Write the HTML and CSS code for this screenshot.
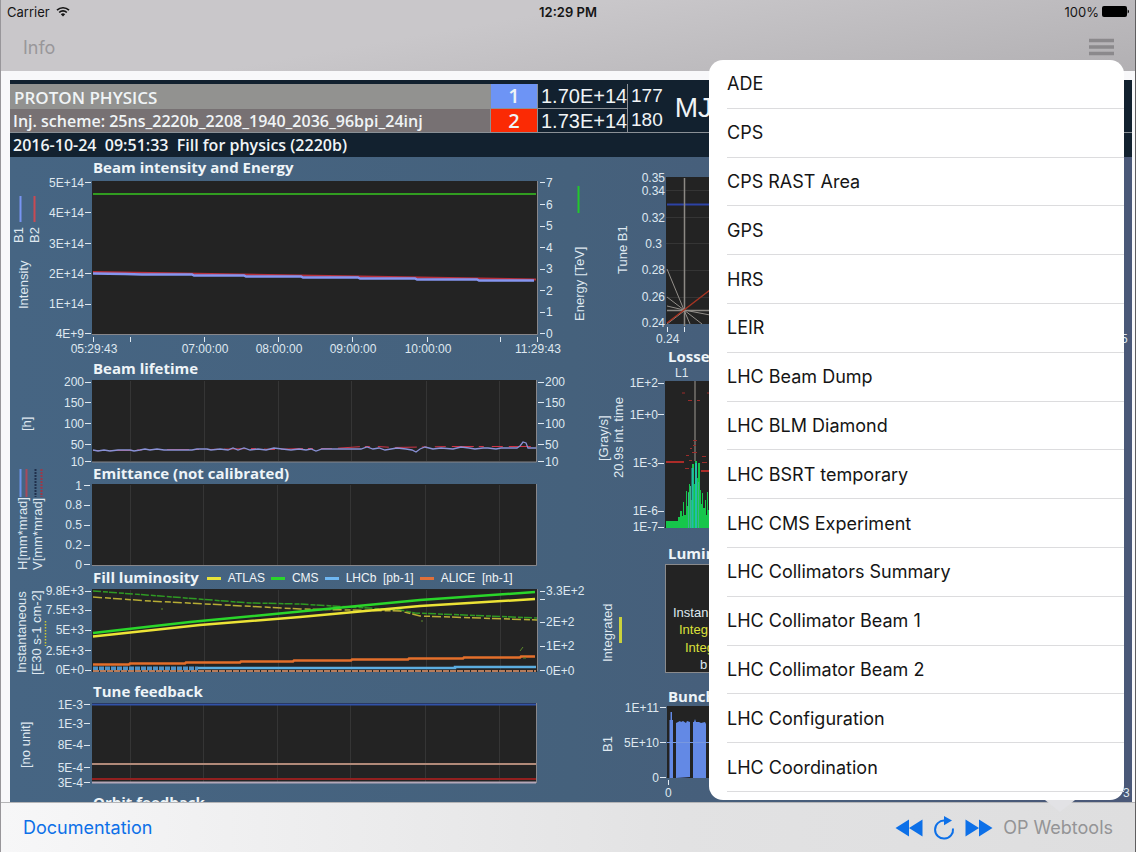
FILE: index.html
```
<!DOCTYPE html>
<html lang="en">
<head>
  <meta charset="UTF-8">
  <meta name="viewport" content="width=device-width, initial-scale=1.0">
  <title>OP Webtools</title>
  <link rel="stylesheet" href="styles.css">
</head>
<body>
  <div class="screen">
    <!-- Status bar + navigation -->
    <header class="top-bar">
      <div class="status">
        <div class="status-left">
          <span>Carrier</span>
          <svg width="14" height="11" viewBox="0 0 14 11" aria-hidden="true">
            <path d="M1 4.2a8.6 8.6 0 0 1 12 0M3.2 6.5a5.4 5.4 0 0 1 7.6 0" fill="none" stroke="#151515" stroke-width="1.7"/>
            <path d="M7 10.6L4.8 8.3a3.1 3.1 0 0 1 4.4 0z" fill="#151515"/>
          </svg>
        </div>
        <div class="status-time">12:29 PM</div>
        <div class="status-right">
          <span>100%</span>
          <svg width="27" height="11" viewBox="0 0 27 11" aria-hidden="true">
            <rect x="0" y="0" width="25" height="11" rx="2"/>
            <path d="M25.6 3.5q1.4.5 1.4 2t-1.4 2z"/>
          </svg>
        </div>
      </div>
      <nav class="nav">
        <button type="button" class="nav-button">Info</button>
        <button type="button" class="menu-button" aria-label="Menu">
          <svg width="26" height="18" viewBox="0 0 26 18"><path d="M0 2.500h25M0 9h25M0 15.500h25" stroke="#8b898c" stroke-width="3.500"/></svg>
        </button>
      </nav>
    </header>

    <!-- LHC page 1 -->
    <main class="webview">
      <div class="dashboard">
        <div class="summary">
          <div class="mode">PROTON PHYSICS</div>
          <div class="beam beam1">1</div>
          <div class="value">1.70E+14</div>
          <div class="energy"><span class="mj-values">177<br>180</span><span class="mj">MJ</span></div>
          <div class="scheme">Inj. scheme: 25ns_2220b_2208_1940_2036_96bpi_24inj</div>
          <div class="beam beam2">2</div>
          <div class="value">1.73E+14</div>
        </div>
        <div class="fill-info">2016-10-24&nbsp; 09:51:33&nbsp; Fill for physics (2220b)</div>

        <div class="charts">
          <div class="column">
            <section>
              <h2>Beam intensity and Energy</h2>
              <svg class="chart" viewBox="10 177 590 181">
                <rect class="plot" x="92" y="181" width="445" height="153"/>
                <path class="frame" d="M537.5 181v153.500H92"/>
                <path class="tick" d="M85 182.500h6M85 212.500h6M85 243.500h6M85 273.500h6M85 304.500h6M85 333.500h6M540 182.500h5M540 204.500h5M540 226.500h5M540 247.500h5M540 269.500h5M540 290.500h5M540 312.500h5M540 333.500h5M93.500 337v5M130.500 337v5M204.500 337v5M278.500 337v5M352.500 337v5M427.500 337v5M500.500 337v5M537.500 337v5"/>
                <g class="end">
                  <text x="84" y="187">5E+14</text><text x="84" y="217">4E+14</text><text x="84" y="248">3E+14</text>
                  <text x="84" y="278">2E+14</text><text x="84" y="308">1E+14</text><text x="84" y="338">4E+9</text>
                </g>
                <text x="546" y="187">7</text><text x="546" y="209">6</text><text x="546" y="230">5</text><text x="546" y="252">4</text>
                <text x="546" y="273">3</text><text x="546" y="295">2</text><text x="546" y="316">1</text><text x="546" y="338">0</text>
                <g class="mid">
                  <text x="94" y="353">05:29:43</text><text x="205" y="353">07:00:00</text><text x="279" y="353">08:00:00</text>
                  <text x="353" y="353">09:00:00</text><text x="428" y="353">10:00:00</text><text x="538" y="353">11:29:43</text>
                </g>
                <path d="M93 194h443" stroke="#319c20" stroke-width="2"/>
                <path d="M93 272L536 279.500" fill="none" stroke="#b8303c" stroke-width="2"/>
                <path d="M93 273.500l32 .5 17 .5h50l2 1h50l2 1h55l2 1h55l2 1h55l2 1h60l2 1h55" fill="none" stroke="#8595f0" stroke-width="2.500"/>
                <path d="M20.500 196v26" stroke="#7895f2" stroke-width="2"/>
                <path d="M34.500 196v26" stroke="#c94a52" stroke-width="2"/>
                <path d="M578.500 186v27" stroke="#23c72c" stroke-width="2"/>
                <g class="side">
                  <text transform="translate(23 243) rotate(-90)">B1</text>
                  <text transform="translate(39 243) rotate(-90)">B2</text>
                  <text transform="translate(28 309) rotate(-90)">Intensity</text>
                  <text transform="translate(584 321) rotate(-90)">Energy [TeV]</text>
                </g>
              </svg>
            </section>

            <section>
              <h2>Beam lifetime</h2>
              <svg class="chart" viewBox="10 378 590 85">
                <rect class="plot" x="92" y="380" width="445" height="82"/>
                <path class="grid-line" d="M130.500 381v80M204.500 381v80M278.500 381v80M351.500 381v80M426.500 381v80M499.500 381v80"/>
                <path class="frame" d="M536.500 380v82H92"/>
                <path class="tick" d="M85 382.500h6M85 402.500h6M85 423.500h6M85 444.500h6M85 461.500h6M538 382.500h6M538 402.500h6M538 423.500h6M538 444.500h6M538 461.500h6"/>
                <g class="end">
                  <text x="84" y="386">200</text><text x="84" y="407">150</text><text x="84" y="428">100</text><text x="84" y="449">50</text><text x="84" y="466">10</text>
                </g>
                <text x="545" y="386">200</text><text x="545" y="407">150</text><text x="545" y="428">100</text><text x="545" y="449">50</text><text x="545" y="466">10</text>
                <path d="M93 450.500h37l18-1h60l45-1 20 1 30-1h30l30-2h15l15 1 60-1h83" fill="none" stroke="#cf3347" stroke-dasharray="11 6 22 5 5 8"/>
                <path d="M93 450l5 1 6-1 6 1 8-1h12l4 1 6-1 5-1 5 1 7-1 7 1h28l5-1h10l4 1 9-1 8 1 5-2 5 2 6-2 6 2 8-1 8 1 8-2 8 1 9 1 8-1 7 1 5-1 5 2 6-2h39l6-2 6 2 6-1 6 2 6-1 6-1 9 1 6 1 4 2 4-3 5-2 8 2 8-1 12 1 8-2 8 1 6 1 8-1h5l8 1 5-1h16l3-2 3-4 3 1 2 5h8" fill="none" stroke="#8991d5" stroke-width="1.300"/>
                <g class="side"><text transform="translate(31 431) rotate(-90)">[h]</text></g>
              </svg>
            </section>

            <section>
              <h2>Emittance (not calibrated)</h2>
              <svg class="chart" viewBox="10 483 590 84">
                <rect class="plot" x="92" y="484" width="445" height="81"/>
                <path class="grid-line" d="M130.500 485v80M203.500 485v80M277.500 485v80M350.500 485v80M425.500 485v80M499.500 485v80"/>
                <path class="frame" d="M536.500 484v81.500H92"/>
                <path class="tick" d="M84 485.500h6M84 505.500h6M84 525.500h6M84 545.500h6M84 564.500h6"/>
                <g class="end">
                  <text x="82" y="490">1</text><text x="82" y="509">0.8</text><text x="82" y="529">0.5</text><text x="82" y="549">0.2</text><text x="82" y="569">0</text>
                </g>
                <path d="M20.500 469v28" stroke="#6b94e8" stroke-width="2"/>
                <path d="M26.500 469v28" stroke="#a64b5c" stroke-width="2"/>
                <path d="M35.500 469v28" stroke="#20304c" stroke-width="2" stroke-dasharray="2 1"/>
                <path d="M41.500 469v28" stroke="#9c3848" stroke-width="2" stroke-dasharray="2 1"/>
                <g class="side">
                  <text transform="translate(27 570) rotate(-90)">H[mm*mrad]</text>
                  <text transform="translate(42 570) rotate(-90)">V[mm*mrad]</text>
                </g>
              </svg>
            </section>

            <section>
              <div class="title-row">
                <h2>Fill luminosity</h2>
                <ul class="legend">
                  <li class="atlas">ATLAS</li>
                  <li class="cms">CMS</li>
                  <li class="lhcb">LHCb&nbsp; [pb-1]</li>
                  <li class="alice">ALICE&nbsp; [nb-1]</li>
                </ul>
              </div>
              <svg class="chart" viewBox="10 587 590 94">
                <rect class="plot" x="92" y="589" width="445" height="83"/>
                <path class="grid-line" d="M130.500 590v81M204.500 590v81M278.500 590v81M351.500 590v81M426.500 590v81M500.500 590v81"/>
                <path class="frame" d="M537.500 589v82"/>
                <path class="tick" d="M85 591.500h6M85 610.500h6M85 630.500h6M85 650.500h6M85 670.500h6M540 591.500h5M540 599.500h5M540 622.500h5M540 646.500h5M540 670.500h5"/>
                <g class="end">
                  <text x="84" y="595">9.8E+3</text><text x="84" y="614">7.5E+3</text><text x="84" y="634">5E+3</text><text x="84" y="655">2.5E+3</text><text x="84" y="674">0E+0</text>
                </g>
                <text x="546" y="595">3.3E+2</text><text x="546" y="626">2E+2</text><text x="546" y="650">1E+2</text><text x="546" y="675">0E+0</text>
                <path d="M93 591l67 5 90 7 50 1 100 6 15 3 122 5" fill="none" stroke="#2f9a23" stroke-width="1.500" stroke-dasharray="8 2 5 1"/>
                <path d="M93 597l57 4 150 8 100 2 20 5 117 4" fill="none" stroke="#b7ad35" stroke-width="1.500" stroke-dasharray="9 3 6 2"/>
                <path d="M93 633l97-11 110-10.500 120-11.500 115-8" fill="none" stroke="#2ad62a" stroke-width="2.500"/>
                <path d="M93 636.500l107-11.500 100-8 120-11 115-7" fill="none" stroke="#ece336" stroke-width="2.500"/>
                <path d="M93 664.500h36l1-1h55l1-1h54l1-1h52l1-1h57l1-1h56l1-1h54l1-1h56l1-1h14" fill="none" stroke="#e36f2b" stroke-width="2.500"/>
                <path d="M93 668.500h105" stroke="#4d92c7" stroke-width="4" stroke-dasharray="5 1"/>
                <path d="M198 668h257v-1h81" fill="none" stroke="#5bade0" stroke-width="2.500"/>
                <path d="M93 671h443" stroke="#b77b5a" stroke-width="2" stroke-dasharray="6 1"/>
                <path d="M162 608v2M422 620v2M520 651l3-4M523 658h3" stroke="#5d8a2b" stroke-width="1"/>
                <path d="M45.500 621v25" stroke="#d0c934" stroke-width="1.500" stroke-dasharray="1.500 1.500"/>
                <g class="side">
                  <text transform="translate(26 673) rotate(-90)">Instantaneous</text>
                  <text transform="translate(41 675) rotate(-90)">[E30 s-1 cm-2]</text>
                </g>
              </svg>
            </section>

            <section>
              <h2>Tune feedback</h2>
              <svg class="chart" viewBox="10 701 590 91">
                <rect class="plot" x="92" y="703" width="445" height="80"/>
                <path class="grid-line" d="M130.500 704v78M203.500 704v78M277.500 704v78M350.500 704v78M425.500 704v78M499.500 704v78"/>
                <path class="frame" d="M536.500 703v80"/>
                <path class="tick" d="M84 704.500h6M84 723.500h6M84 745.500h6M84 767.500h6M84 782.500h6"/>
                <g class="end">
                  <text x="83" y="709">1E-3</text><text x="83" y="728">1E-3</text><text x="83" y="749">8E-4</text><text x="83" y="772">5E-4</text><text x="83" y="787">3E-4</text>
                </g>
                <path d="M92 704.500h444" stroke="#3152a8" stroke-width="2"/>
                <path d="M92 764h444" stroke="#b18a79" stroke-width="2"/>
                <path d="M92 779h444" stroke="#92201f" stroke-width="2"/>
                <path d="M92 782.500h444" stroke="#b4a7b8" stroke-width="2"/>
                <g class="side"><text transform="translate(30 768) rotate(-90)">[no unit]</text></g>
              </svg>
            </section>

            <section>
              <h2>Orbit feedback</h2>
            </section>
          </div>

          <div class="column">
            <section>
              <svg class="chart" viewBox="600 157 532 189">
                <rect class="plot" x="666" y="177" width="440" height="147"/>
                <path class="grid-line" d="M666 190.500h440M666 217.500h440M666 243.500h440M666 270.500h440M666 297.500h440"/>
                <g class="end">
                  <text x="665" y="182">0.35</text><text x="665" y="195">0.34</text><text x="665" y="222">0.32</text><text x="662" y="248">0.3</text>
                  <text x="665" y="274">0.28</text><text x="665" y="301">0.26</text><text x="665" y="327">0.24</text>
                </g>
                <text x="656" y="343">0.24</text><text x="1121" y="343">5</text>
                <path d="M667 204.500h439" stroke="#2d43a6" stroke-width="2"/>
                <path d="M684.500 178v148M667 310.500h439" stroke="#8c8984" stroke-width="1.500"/>
                <path d="M667 269l17 41 6 14M667 297l17 13 18 14M667 306l17 4 26 5M667 324l17-13" fill="none" stroke="#94908b"/>
                <path d="M667 323l17-13 26-20" fill="none" stroke="#a63422" stroke-width="1.500"/>
                <path class="tick" d="M667.500 327v5M684.500 327v5"/>
                <g class="side"><text transform="translate(627 274) rotate(-90)">Tune B1</text></g>
              </svg>
            </section>

            <section>
              <h2>Losses</h2>
              <svg class="chart" viewBox="600 366 532 177">
                <text x="675" y="377">L1</text>
                <rect class="plot" x="665" y="381" width="440" height="147"/>
                <path class="tick" d="M658 383.500h6M658 414.500h6M658 463.500h6M658 511.500h6M658 527.500h6"/>
                <g class="end">
                  <text x="658" y="387">1E+2</text><text x="658" y="419">1E+0</text><text x="658" y="467">1E-3</text><text x="658" y="515">1E-6</text><text x="658" y="531">1E-7</text>
                </g>
                <path d="M695 381v80" stroke="#76736e" stroke-width="1.500"/>
                <path d="M666 462h18M701 471h8" stroke="#ac2c29" stroke-width="2"/>
                <path d="M682 393h3M688 400.500h4M697 400.500h3M707 393h2M693 440.500h4M693 445.500h3M686 455.500h3M692 452.500h5M702 456.500h4M689 460.500h3M702 462.500h5M690 448.500h2M685 468.500h4" stroke="#9b2d2b"/>
                <path d="M666 528V521h12V517h2V511h2V516h1V502h1V515h2V491h1V506h1V492h1V484h1V500h2V464h2V484h1V461h2V478h1V463h2V490h1V504h1V493h1V508h2V500h1V515h1V492h1V510h1V496h1V512h2V528z" fill="#16c64b"/>
                <path d="M692.500 528v-60M696 528v-65" stroke="#21bdaa" stroke-width="2"/>
                <path d="M688.500 528v-35M690.500 528v-42M698.500 528v-46" stroke="#3cb293"/>
                <g class="side">
                  <text transform="translate(608 461) rotate(-90)">[Gray/s]</text>
                  <text transform="translate(623 478) rotate(-90)">20.9s int. time</text>
                </g>
              </svg>
            </section>

            <section>
              <h2>Luminosity</h2>
              <svg class="chart" viewBox="600 563 532 123">
                <rect class="plot box" x="665.500" y="564.500" width="440" height="108"/>
                <path d="M620.500 617v26" stroke="#cbd23c" stroke-width="3"/>
                <g class="side">
                  <text x="673" y="617">Instan</text>
                  <text class="yellow" x="679" y="634">Integ</text>
                  <text class="yellow" x="685" y="652">Integ</text>
                  <text x="700" y="669">b</text>
                  <text transform="translate(612 662) rotate(-90)">Integrated</text>
                </g>
              </svg>
            </section>

            <section>
              <h2>Bunch intensity</h2>
              <svg class="chart" viewBox="600 706 532 106">
                <rect class="plot" x="667" y="706" width="440" height="72"/>
                <path class="tick" d="M660 707.500h6M660 742.500h6M660 777.500h6M668.500 780v5"/>
                <g class="end">
                  <text x="659" y="712">1E+11</text><text x="659" y="747">5E+10</text><text x="659" y="782">0</text>
                </g>
                <path d="M669.500 778V720h1V712h1.500V720h1V778zM676 778v-55l4-2 1 1 2-1 3 2 1-2 3 1v55zM693 778v-56h1l1-3 1 3h3l2 1 4-1 1 2v54zM709 778v-57h14v57z" fill="#6389e5"/>
                <path d="M667 742.500h42" stroke="#7898df"/>
                <text x="665" y="797">0</text><text x="1123" y="797">3</text>
                <g class="side"><text transform="translate(612 752) rotate(-90)">B1</text></g>
              </svg>
            </section>
          </div>
        </div>
      </div>
    </main>

    <!-- Bottom toolbar -->
    <footer class="toolbar">
      <button type="button" class="doc-button">Documentation</button>
      <div class="controls">
        <button type="button" aria-label="Previous">
          <svg width="28" height="18" viewBox="0 0 28 18"><path d="M0.500 9L14 0.500V17.500zM14 9L27.500 0.500V17.500z"/></svg>
        </button>
        <button type="button" aria-label="Reload">
          <svg width="22" height="24" viewBox="0 0 22 24"><path d="M14 4.600H11.500A9 9 0 1 0 20 12.500" fill="none" stroke="#0d70e8" stroke-width="2"/><path d="M11 0l8 4.600-8 4.600z"/></svg>
        </button>
        <button type="button" aria-label="Next">
          <svg width="28" height="18" viewBox="0 0 28 18"><path d="M0.500 0.500L14 9L0.500 17.500zM14 0.500L27.500 9L14 17.500z"/></svg>
        </button>
        <button type="button" class="tools-button">OP Webtools</button>
      </div>
    </footer>

    <!-- Tool list popover -->
    <div class="popover">
      <ul>
        <li><button type="button">ADE</button></li>
        <li><button type="button">CPS</button></li>
        <li><button type="button">CPS RAST Area</button></li>
        <li><button type="button">GPS</button></li>
        <li><button type="button">HRS</button></li>
        <li><button type="button">LEIR</button></li>
        <li><button type="button">LHC Beam Dump</button></li>
        <li><button type="button">LHC BLM Diamond</button></li>
        <li><button type="button">LHC BSRT temporary</button></li>
        <li><button type="button">LHC CMS Experiment</button></li>
        <li><button type="button">LHC Collimators Summary</button></li>
        <li><button type="button">LHC Collimator Beam 1</button></li>
        <li><button type="button">LHC Collimator Beam 2</button></li>
        <li><button type="button">LHC Configuration</button></li>
        <li><button type="button">LHC Coordination</button></li>
      </ul>
    </div>
  </div>
</body>
</html>
```
FILE: styles.css
```
* { box-sizing: border-box; }
body { margin: 0; font-family: Inter, "Liberation Sans", sans-serif; color: #151515; }
button { border: none; background: none; padding: 0; margin: 0; font: inherit; color: inherit; cursor: pointer; }
ul { list-style: none; margin: 0; padding: 0; }
h2 { margin: 0; padding-left: 83px; font-size: 15px; line-height: 20px; font-weight: 700; color: #eef4f8; white-space: nowrap; }

.screen {
  position: relative;
  display: flex;
  flex-direction: column;
  height: 100vh;
  overflow: hidden;
  border-left: 1px solid #98969a;
  border-right: 1px solid #5f5e60;
}

/* top */
.top-bar { flex: none; background: linear-gradient(170deg, #c9c7ca 40%, #b2b0b3); }
.status { display: grid; grid-template-columns: 1fr auto 1fr; align-items: center; height: 23px; padding: 0 6px; font-size: 13px; }
.status-left, .status-right { display: flex; align-items: center; gap: 6px; }
.status-right { justify-content: flex-end; gap: 3px; }
.status-time { font-weight: 600; }
.nav { display: flex; justify-content: space-between; align-items: center; height: 48px; padding: 0 20px 0 22px; }
.nav-button { font-size: 18px; color: #99979a; }
.menu-button { display: flex; }

/* dashboard */
.webview { flex: 1; min-height: 0; overflow: hidden; padding: 9px 3px 0 9px; background: #f8f8fa; }
.dashboard { background: linear-gradient(90deg, #466583, #45617c 50%, #4a5878); font-family: "Open Sans", sans-serif; color: #f0f4f6; }
.summary {
  display: grid;
  grid-template-columns: 481px 47px 90px 1fr;
  grid-template-rows: 25px 24px;
  padding-top: 4px;
  background: #12212f;
  font-size: 16px;
  font-weight: 600;
  line-height: 24px;
}
.summary > div { border-bottom: 1px solid #8a9096; border-right: 1px solid #8a9096; white-space: nowrap; }
.summary .mode { background: #929290; padding: 2px 4px; font-size: 17px; border-bottom: none; }
.scheme { background: #777173; padding-left: 3px; }
.beam { text-align: center; font-size: 20px; }
.beam1 { background: #6d94f5; }
.beam2 { background: #fb2a04; }
.value { padding-left: 3px; font-family: "Liberation Sans", sans-serif; font-size: 20px; font-weight: 400; }
.summary .energy { grid-row: 1 / 3; grid-column: 4; display: flex; align-items: center; gap: 12px; padding-left: 3px; border-right: none; font-family: "Liberation Sans", sans-serif; font-weight: 400; }
.mj-values { font-size: 19px; }
.mj { font-size: 28px; }
.fill-info { height: 24px; padding-left: 3px; background: #12212f; font-size: 16px; font-weight: 600; line-height: 24px; white-space: pre; }

.charts { display: grid; grid-template-columns: 590fr 532fr; align-items: start; }
.column:last-child h2 { padding-left: 68px; }
.title-row { display: flex; gap: 8px; height: 20px; }
.legend { display: flex; gap: 6px; padding-top: 2px; font-family: "Liberation Sans", sans-serif; font-size: 12px; line-height: 20px; }
.legend li { display: flex; align-items: center; gap: 7px; white-space: nowrap; }
.legend li::before { content: ""; width: 14px; height: 3px; background: #e8e33a; }
.legend .cms::before { background: #2ad62a; }
.legend .lhcb::before { background: #6fb7f2; }
.legend .alice::before { background: #e0703a; }

.chart { display: block; width: 100%; height: auto; overflow: visible; font-family: "Liberation Sans", sans-serif; font-size: 12px; fill: #dfe8f0; }
.chart .plot { fill: #232323; }
.chart .box { stroke: #8a8a8c; }
.chart .frame { fill: none; stroke: #87868a; }
.chart .grid-line { fill: none; stroke: #353535; }
.chart .tick { fill: none; stroke: #dfe8f0; }
.chart .end { text-anchor: end; }
.chart .mid { text-anchor: middle; }
.chart .side { font-size: 13px; }
.chart .yellow { fill: #dde03a; }

/* bottom */
.toolbar {
  flex: none;
  display: flex;
  justify-content: space-between;
  align-items: center;
  height: 50px;
  padding: 0 22px;
  border-top: 1px solid #b5b5b7;
  background: linear-gradient(90deg, #f7f7f8, #e2e2e3 60%, #dededf);
  font-size: 18px;
}
.doc-button { color: #0d70e8; }
.controls { display: flex; align-items: center; gap: 10px; }
.controls button { display: flex; fill: #0d70e8; }
.controls .tools-button { color: #949496; }

/* popover */
.popover { position: absolute; top: 60px; right: 11px; bottom: 52px; width: 415px; background: #fff; border-radius: 14px; }
.popover::after {
  content: "";
  position: absolute;
  top: 100%;
  right: 49px;
  width: 30px;
  height: 12px;
  background: #e2e2e5;
  clip-path: polygon(0 0, 100% 0, 50% 100%);
}
.popover ul { display: flex; flex-direction: column; height: 100%; padding: 0 0 8px 18px; }
.popover li { flex: 1; min-height: 0; border-bottom: 1px solid #dcdcde; }
.popover li button { width: 100%; height: 100%; font-size: 18px; text-align: left; }
```
